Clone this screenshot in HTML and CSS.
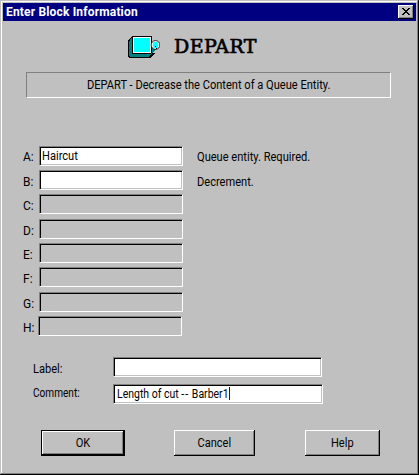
FILE: index.html
```html
<!DOCTYPE html>
<html lang="en">
<head>
<meta charset="utf-8">
<title>Enter Block Information</title>
<link rel="stylesheet" href="styles.css">
</head>
<body>
<main class="dialog">
  <header class="titlebar">
    <h1><span class="t title">Enter Block Information</span></h1>
    <button class="close" aria-label="Close"><svg width="8" height="7" viewBox="0 0 8 7" shape-rendering="crispEdges"><path d="M0 0h2v1h1v1h2V1h1V0h2v1H7v1H6v1H5v1h1v1h1v1h1v1H6V6H5V5H3v1H2v1H0V6h1V5h1V4h1V3H2V2H1V1H0z"/></svg></button>
  </header>
  <section class="heading">
    <svg class="icon" width="32" height="24" viewBox="0 0 32 24">
      <g shape-rendering="crispEdges">
      <path d="M4 0h20v17h3v1h-1v1h-1v1h-1v1h-1v1H1v-1H0V4h1V3h1V2h1V1h1z"/>
      <path fill="#008080" d="M3 2h1v16h19v1h-1v1h-1v1H2v-1H1V5h1V3h1zM24 9h1v4h3v1h-1v1h-1v1h-1v1h-1v1h-1v-1h1z"/>
      <path fill="#fff" d="M5 1h18v16H5z"/>
      <path fill="#0ff" d="M6 2h16v14H6z"/>
      </g>
      <circle cx="27.5" cy="9" r="4.4" fill="#fff" stroke="#000" stroke-width=".8"/>
      <ellipse cx="27.5" cy="9" rx="2.8" ry="3.3" fill="#0ff"/>
      <path d="M27 10h1v1h-1zM28 12h1v1h-1z"/>
    </svg>
    <h2><span class="t depart">DEPART</span></h2>
  </section>
  <p class="description"><span class="t narrow">DEPART - Decrease the Content of a Queue Entity.</span></p>
  <form>
    <div class="operands">
      <div class="row first"><span class="t key">A:</span><div class="field"><span class="t narrow">Haircut</span></div><span class="t hint narrow">Queue entity. Required.</span></div>
      <div class="row"><span class="t key">B:</span><div class="field"></div><span class="t hint narrow">Decrement.</span></div>
      <div class="row tall"><span class="t key">C:</span><div class="field off"></div></div>
      <div class="row"><span class="t key">D:</span><div class="field off"></div></div>
      <div class="row"><span class="t key">E:</span><div class="field off"></div></div>
      <div class="row tall"><span class="t key">F:</span><div class="field off"></div></div>
      <div class="row"><span class="t key">G:</span><div class="field off"></div></div>
      <div class="row last"><span class="t key">H:</span><div class="field off"></div></div>
    </div>
    <div class="notes">
      <div class="row label"><span class="t key narrow">Label:</span><div class="field"></div></div>
      <div class="row comment"><span class="t key">Comment:</span><div class="field"><span class="t entry">Length of cut <span class="dashes">--</span> Barber1<i class="caret"></i></span></div></div>
    </div>
    <div class="actions">
      <button class="btn ok" type="button"><span class="t centered">OK</span></button>
      <button class="btn cancel" type="button"><span class="t centered">Cancel</span></button>
      <button class="btn help" type="button"><span class="t centered">Help</span></button>
    </div>
  </form>
</main>
</body>
</html>
```
FILE: styles.css
```css
* { box-sizing: border-box; }
body { margin: 0; background: #c0c0c0; color: #000; font: 12px/14px Roboto, "Liberation Sans", sans-serif; }
h1, h2, p { margin: 0; }
button { padding: 0; margin: 0; font: inherit; color: inherit; border-radius: 0; }
.t { display: block; white-space: pre; }
.narrow { transform: scaleX(.924); transform-origin: 0 0; }
.entry { margin-left: 1px; transform: scaleX(.875); transform-origin: 0 0; }
.dashes { letter-spacing: 1.2px; }
.centered { transform: scaleX(.92); }
.title { letter-spacing: .17px; }
.dialog { width: 419px; height: 475px; padding: 2px; background: #c0c0c0; box-shadow: inset -1px -1px #000, inset 1px 1px #c0c0c0, inset -2px -2px #808080, inset 2px 2px #fff; }
.titlebar { display: flex; justify-content: space-between; height: 18px; margin: 1px 1px 0; padding: 2px 2px 2px 3px; background: #000080; }
.titlebar h1 { color: #fff; font: bold 12px/14px Roboto, sans-serif; }
.close { display: flex; align-items: center; justify-content: center; width: 16px; height: 14px; padding: 0 1px 1px 0; border: 0; background: #c0c0c0; box-shadow: inset -1px -1px #000, inset 1px 1px #fff, inset -2px -2px #808080; }
.heading { display: flex; height: 51px; padding: 15px 0 0 126px; }
.icon { flex: none; }
.heading h2 { margin: -1px 0 0 14px; font: 19px/22px "DejaVu Serif", serif; letter-spacing: .4px; -webkit-text-stroke: .7px #000; }
.description { width: 365px; height: 26px; margin-left: 24px; padding: 5px 0 0 60px; border: 1px solid; border-color: #808080 #fff #fff #808080; }
.operands { padding: 48px 0 0 20px; }
.operands .row { height: 24px; }
.operands .tall { height: 25px; }
.row { display: flex; }
.key { width: 17px; padding-top: 5px; flex: none; }
.first .key, .first .hint { padding-top: 4px; }
.operands .key { padding-left: 1px; }
.field { flex: none; display: flex; width: 144px; height: 20px; padding: 2px 0 0 2px; border: 1px solid; border-color: #808080 #fff #fff #808080; background: #fff; box-shadow: inset 1px 1px #000, inset -1px -1px #c0c0c0; }
.off { background: #c0c0c0; }
.hint { margin-left: 14px; padding-top: 5px; }
.last .key { width: 16px; }
.notes { padding: 17px 0 0 31px; }
.notes .key { width: 80px; }
.label { height: 27px; }
.label .field { width: 209px; }
.comment .key { padding-top: 2px; transform: scaleX(.84); transform-origin: 0 0; }
.comment .field { width: 210px; }
.caret { display: inline-block; width: 1px; height: 13px; background: #000; vertical-align: -2px; }
.actions { display: flex; padding: 26px 0 0 39px; }
.btn { display: flex; justify-content: center; height: 26px; padding-top: 6px; background: #c0c0c0; border: 0; box-shadow: inset -1px -1px #000, inset 1px 1px #fff, inset -2px -2px #808080; }
.ok { width: 84px; box-shadow: inset 1px 1px #000, inset -2px -2px #000, inset 2px 2px #fff, inset -3px -3px #808080; }
.cancel { width: 81px; margin-left: 49px; }
.help { width: 75px; margin-left: 50px; }
```
